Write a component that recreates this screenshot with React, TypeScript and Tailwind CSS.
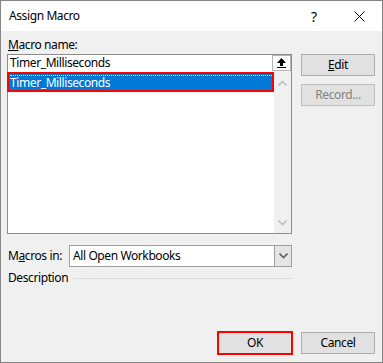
import React from 'react';

const FONT = { fontFamily: '"Noto Sans", "Open Sans", sans-serif' };

function Chevron({ up = false, color = '#c0c0c0' }: { up?: boolean; color?: string }) {
  return (
    <svg width="9" height="6" viewBox="0 0 9 6" className={up ? 'rotate-180' : ''}>
      <polyline points="0.5,0.5 4.5,4.5 8.5,0.5" fill="none" stroke={color} strokeWidth="1.6" />
    </svg>
  );
}

function Button({ children, disabled = false }: { children: React.ReactNode; disabled?: boolean }) {
  return (
    <div
      className={`w-[74px] h-[22px] flex items-center justify-center border text-[12px] ${
        disabled ? 'border-[#bfbfbf] bg-[#e1e1e1] text-[#838383]' : 'border-[#adadad] bg-[#e1e1e1] text-black'
      }`}
    >
      {children}
    </div>
  );
}

export default function App() {
  return (
    <div
      className="w-[383px] h-[363px] border border-[#858585] bg-[#f0f0f0] flex flex-col text-black tracking-[-0.4px]"
      style={FONT}
    >
      {/* Title bar */}
      <div className="h-[30px] bg-white flex items-center pl-[8px] shrink-0">
        <span className="text-[12px] flex-1">Assign Macro</span>
        <span className="text-[14px] w-[10px] mr-[33px]">?</span>
        <svg width="11" height="11" viewBox="0 0 11 11" className="mr-[17px]">
          <line x1="0.5" y1="0.5" x2="10.5" y2="10.5" stroke="#000" strokeWidth="1" />
          <line x1="10.5" y1="0.5" x2="0.5" y2="10.5" stroke="#000" strokeWidth="1" />
        </svg>
      </div>

      {/* Body */}
      <div className="flex-1 flex flex-col px-[6px] pb-[7px]">
        <div className="flex">
          {/* Left column */}
          <div className="w-[285px] flex flex-col">
            <div className="h-[23px] pt-[7px] text-[12px] leading-[14px] pl-[1px]">
              <span className="underline">M</span>acro name:
            </div>
            <div className="h-[180px] border border-[#8c8c8c] flex flex-col bg-white">
              {/* input row */}
              <div className="h-[16px] flex items-center shrink-0">
                <span className="flex-1 pl-[2px] text-[12px] leading-[16px]">Timer_Milliseconds</span>
                <div className="w-[19px] h-[16px] border border-[#b4b4b4] bg-white flex items-center justify-center">
                  <svg width="9" height="10" viewBox="0 0 9 10">
                    <polygon points="4.5,0 9,5 6,5 6,8 3,8 3,5 0,5" fill="#000" />
                    <rect x="0" y="9" width="9" height="1" fill="#000" />
                  </svg>
                </div>
              </div>
              {/* list */}
              <div className="flex-1 flex">
                <div className="flex-1">
                  <div className="mt-[1px] -ml-[1px] h-[20px] border-2 border-[#ff0000] bg-[#0078d7] text-white text-[12px] flex items-center pl-[1px]">
                    <span className="w-full h-[14px] leading-[14px] border-t border-dotted border-[#f0e68c] -mt-[1px]">
                      Timer_Milliseconds
                    </span>
                  </div>
                </div>
                <div className="w-[17px] bg-[#f0f0f0] flex flex-col items-center justify-between pt-[9px] pb-[7px]">
                  <Chevron up />
                  <Chevron />
                </div>
              </div>
            </div>
          </div>

          {/* Right column */}
          <div className="ml-[9px] pt-[23px] flex flex-col gap-[8px]">
            <Button>
              <span>
                <span className="underline">E</span>dit
              </span>
            </Button>
            <Button disabled>Record...</Button>
          </div>
        </div>

        {/* Macros in */}
        <div className="flex items-center mt-[11px] w-[285px]">
          <span className="text-[12px] w-[62px] pl-[1px]">
            M<span className="underline">a</span>cros in:
          </span>
          <div className="flex-1 h-[22px] border border-[#a0a0a0] bg-white flex">
            <span className="flex-1 text-[12px] leading-[20px] pl-[3px]">All Open Workbooks</span>
            <div className="w-[17px] bg-[#e5e5e5] border-l border-[#a0a0a0] flex items-center justify-center">
              <Chevron color="#606060" />
            </div>
          </div>
        </div>

        {/* Description */}
        <div className="flex items-center mt-[3px] w-[285px] h-[16px]">
          <span className="text-[12px] pl-[1px]">Description</span>
          <div className="flex-1 h-px bg-[#dcdcdc] ml-[5px]" />
        </div>

        {/* Bottom buttons */}
        <div className="mt-auto flex justify-end gap-[8px] pr-[1px]">
          <div className="w-[76px] h-[24px] border-2 border-[#ff0000] -mt-[1px]">
            <div className="w-full h-full bg-[#e1e1e1] flex items-center justify-center text-[12px]">OK</div>
          </div>
          <Button>Cancel</Button>
        </div>
      </div>
    </div>
  );
}
